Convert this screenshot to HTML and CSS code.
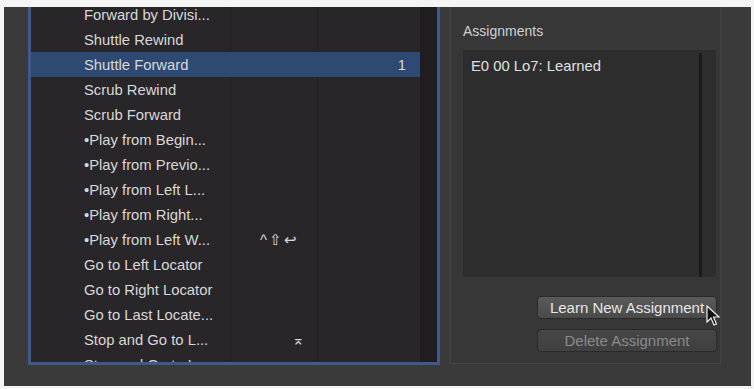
FILE: index.html
```
<!DOCTYPE html>
<html lang="en">
<head>
    <meta charset="UTF-8">
    <title>Key Commands</title>
    <link rel="stylesheet" href="styles.css">
</head>
<body>
    <div class="window">
        <div class="list-panel">
            <div class="list">
                <div class="row"><span class="cmd">Forward by Divisi...</span><span class="key"></span><span class="ctl"></span></div>
                <div class="row"><span class="cmd">Shuttle Rewind</span><span class="key"></span><span class="ctl"></span></div>
                <div class="row selected"><span class="cmd">Shuttle Forward</span><span class="key"></span><span class="ctl">1</span></div>
                <div class="row"><span class="cmd">Scrub Rewind</span><span class="key"></span><span class="ctl"></span></div>
                <div class="row"><span class="cmd">Scrub Forward</span><span class="key"></span><span class="ctl"></span></div>
                <div class="row"><span class="cmd">•Play from Begin...</span><span class="key"></span><span class="ctl"></span></div>
                <div class="row"><span class="cmd">•Play from Previo...</span><span class="key"></span><span class="ctl"></span></div>
                <div class="row"><span class="cmd">•Play from Left L...</span><span class="key"></span><span class="ctl"></span></div>
                <div class="row"><span class="cmd">•Play from Right...</span><span class="key"></span><span class="ctl"></span></div>
                <div class="row"><span class="cmd">•Play from Left W...</span><span class="key">^⇧↩</span><span class="ctl"></span></div>
                <div class="row"><span class="cmd">Go to Left Locator</span><span class="key"></span><span class="ctl"></span></div>
                <div class="row"><span class="cmd">Go to Right Locator</span><span class="key"></span><span class="ctl"></span></div>
                <div class="row"><span class="cmd">Go to Last Locate...</span><span class="key"></span><span class="ctl"></span></div>
                <div class="row"><span class="cmd">Stop and Go to L...</span><span class="key enter">⌅</span><span class="ctl"></span></div>
                <div class="row"><span class="cmd">Stop and Go to L...</span><span class="key"></span><span class="ctl"></span></div>
            </div>
            <div class="track"></div>
        </div>

        <div class="side-panel">
            <div class="label">Assignments</div>
            <div class="assign-box">
                <div class="assign-list">E0 00 Lo7: Learned</div>
                <div class="assign-scroll"></div>
            </div>
            <div class="buttons">
                <button class="btn">Learn New Assignment</button>
                <button class="btn disabled">Delete Assignment</button>
            </div>
            <svg class="cursor" width="14" height="22" viewBox="0 0 14 22">
                <path d="M1 1 L1 17 L5 13 L8 20 L10.5 19 L7.5 12 L13 12 Z" fill="#111" stroke="#eee" stroke-width="1.2"/>
            </svg>
        </div>
    </div>
</body>
</html>
```

FILE: styles.css
```
body {
    margin: 0;
    background-color: #f4f4f4;
    font-family: "Liberation Sans", Arial, sans-serif;
}
.window {
    margin: 7px 3px 0 4px;
    height: 379px;
    background-color: #3a3a3a;
    display: flex;
    align-items: flex-start;
    overflow: hidden;
}
.list-panel {
    margin-left: 24px;
    width: 406px;
    height: 355px;
    border: 3px solid #3d5a88;
    border-top: none;
    background-color: #29262a;
    display: flex;
    overflow: hidden;
}
.list {
    flex: 1;
    margin-top: -5px;
    background: linear-gradient(to right, transparent 199px, #232024 199px, #232024 200px, transparent 200px, transparent 286px, #232024 286px, #232024 287px, transparent 287px);
}
.row {
    display: flex;
    height: 25px;
    align-items: center;
    color: #d8d8d8;
    font-size: 14.8px;
}
.row.selected {
    background-color: #2e4a72;
}
.cmd {
    width: 146px;
    padding-left: 53px;
    white-space: nowrap;
}
.key {
    width: 57px;
    padding-left: 30px;
    font-size: 15px;
    letter-spacing: 2px;
    white-space: nowrap;
}
.key.enter {
    padding-left: 62px;
    width: 25px;
    letter-spacing: 0;
}
.ctl {
    flex: 1;
    text-align: right;
    padding-right: 14px;
}
.track {
    width: 17px;
    background-color: #201d20;
}
.side-panel {
    position: relative;
    margin-left: 10px;
    width: 271px;
    height: 357px;
    border: 1px solid #444;
    border-top: none;
    background-color: #373737;
    padding: 0 0 0 12px;
    box-sizing: border-box;
}
.label {
    margin-top: 16px;
    color: #d0d0d0;
    font-size: 14px;
}
.assign-box {
    margin-top: 11px;
    width: 253px;
    height: 227px;
    background-color: #2d2d2d;
    display: flex;
}
.assign-list {
    flex: 1;
    padding: 8px 0 0 8px;
    color: #e0e0e0;
    font-size: 14.8px;
}
.assign-scroll {
    width: 3px;
    margin-right: 14px;
    margin-top: 3px;
    background-color: #1a1a1a;
}
.buttons {
    margin-top: 19px;
    margin-left: 74px;
    display: flex;
    flex-direction: column;
    gap: 10px;
}
.btn {
    width: 180px;
    height: 23px;
    border: 1px solid #2a2a2a;
    border-radius: 4px;
    background: linear-gradient(#5a5a5a, #4a4a4a);
    color: #e6e6e6;
    font-family: "Liberation Sans", Arial, sans-serif;
    font-size: 15px;
    padding: 0;
}
.btn.disabled {
    background: linear-gradient(#464646, #404040);
    color: #8a8a8a;
}
.cursor {
    position: absolute;
    left: 255px;
    top: 298px;
}
```
